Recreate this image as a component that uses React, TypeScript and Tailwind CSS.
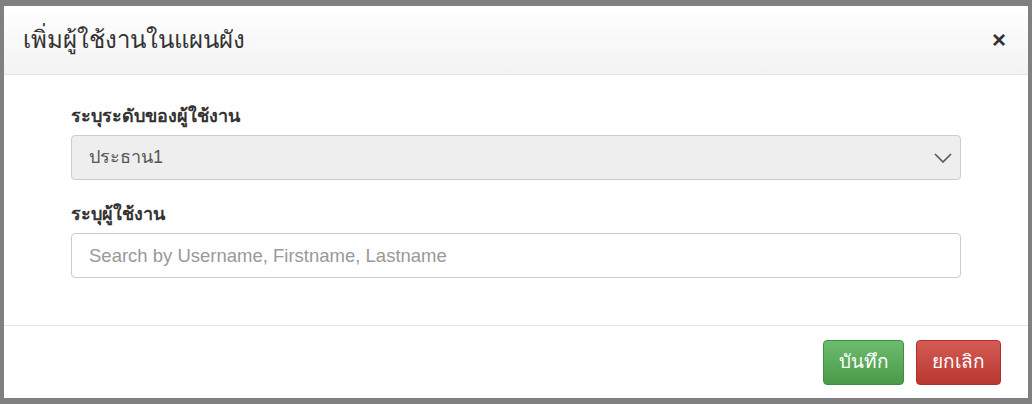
export default function App() {
  return (
    <div className="h-[404px] w-[1032px] bg-[#808080] px-[4px] pt-[6px] font-['Liberation_Sans',Arial,sans-serif] text-[#333]">
      <div className="flex h-[392px] w-full flex-col bg-white">
        <div className="flex h-[69px] items-center justify-between border-b border-[#e5e5e5] bg-gradient-to-b from-white to-[#f3f3f3] pl-[19px] pr-[22px]">
          <h4 className="text-[24px] leading-[30px] text-[#333]">เพิ่มผู้ใช้งานในแผนผัง</h4>
          <button className="text-[24px] font-bold leading-none text-[#333]">×</button>
        </div>

        <div className="flex-1 px-[67px] pt-[28px]">
          <label className="block text-[18px] font-bold leading-[26px]">ระบุระดับของผู้ใช้งาน</label>
          <div className="mt-[6px] flex h-[45px] items-center justify-between rounded-[4px] border border-[#ccc] bg-[#eee] pl-[17px] pr-[8px]">
            <span className="text-[18px] text-[#555]">ประธาน1</span>
            <svg width="18" height="10" viewBox="0 0 18 10" fill="none">
              <path d="M1 1l8 8 8-8" stroke="#555" strokeWidth="1.6" />
            </svg>
          </div>

          <label className="mt-[21px] block text-[18px] font-bold leading-[26px]">ระบุผู้ใช้งาน</label>
          <input
            placeholder="Search by Username, Firstname, Lastname"
            className="mt-[6px] h-[45px] w-full rounded-[4px] border border-[#ccc] bg-white px-[17px] text-[18.5px] text-[#555] outline-none placeholder:text-[#999]"
          />
        </div>

        <div className="flex h-[73px] justify-end gap-[12px] border-t border-[#e5e5e5] pr-[27px] pt-[14px]">
          <button className="h-[45px] w-[81px] rounded-[4px] border border-[#3e8f3e] bg-gradient-to-b from-[#6dbb6d] to-[#4a9a4a] text-[19px] text-white">
            บันทึก
          </button>
          <button className="h-[45px] w-[85px] rounded-[4px] border border-[#b02f2a] bg-gradient-to-b from-[#d45b56] to-[#b8372f] text-[19px] text-white">
            ยกเลิก
          </button>
        </div>
      </div>
    </div>
  )
}
